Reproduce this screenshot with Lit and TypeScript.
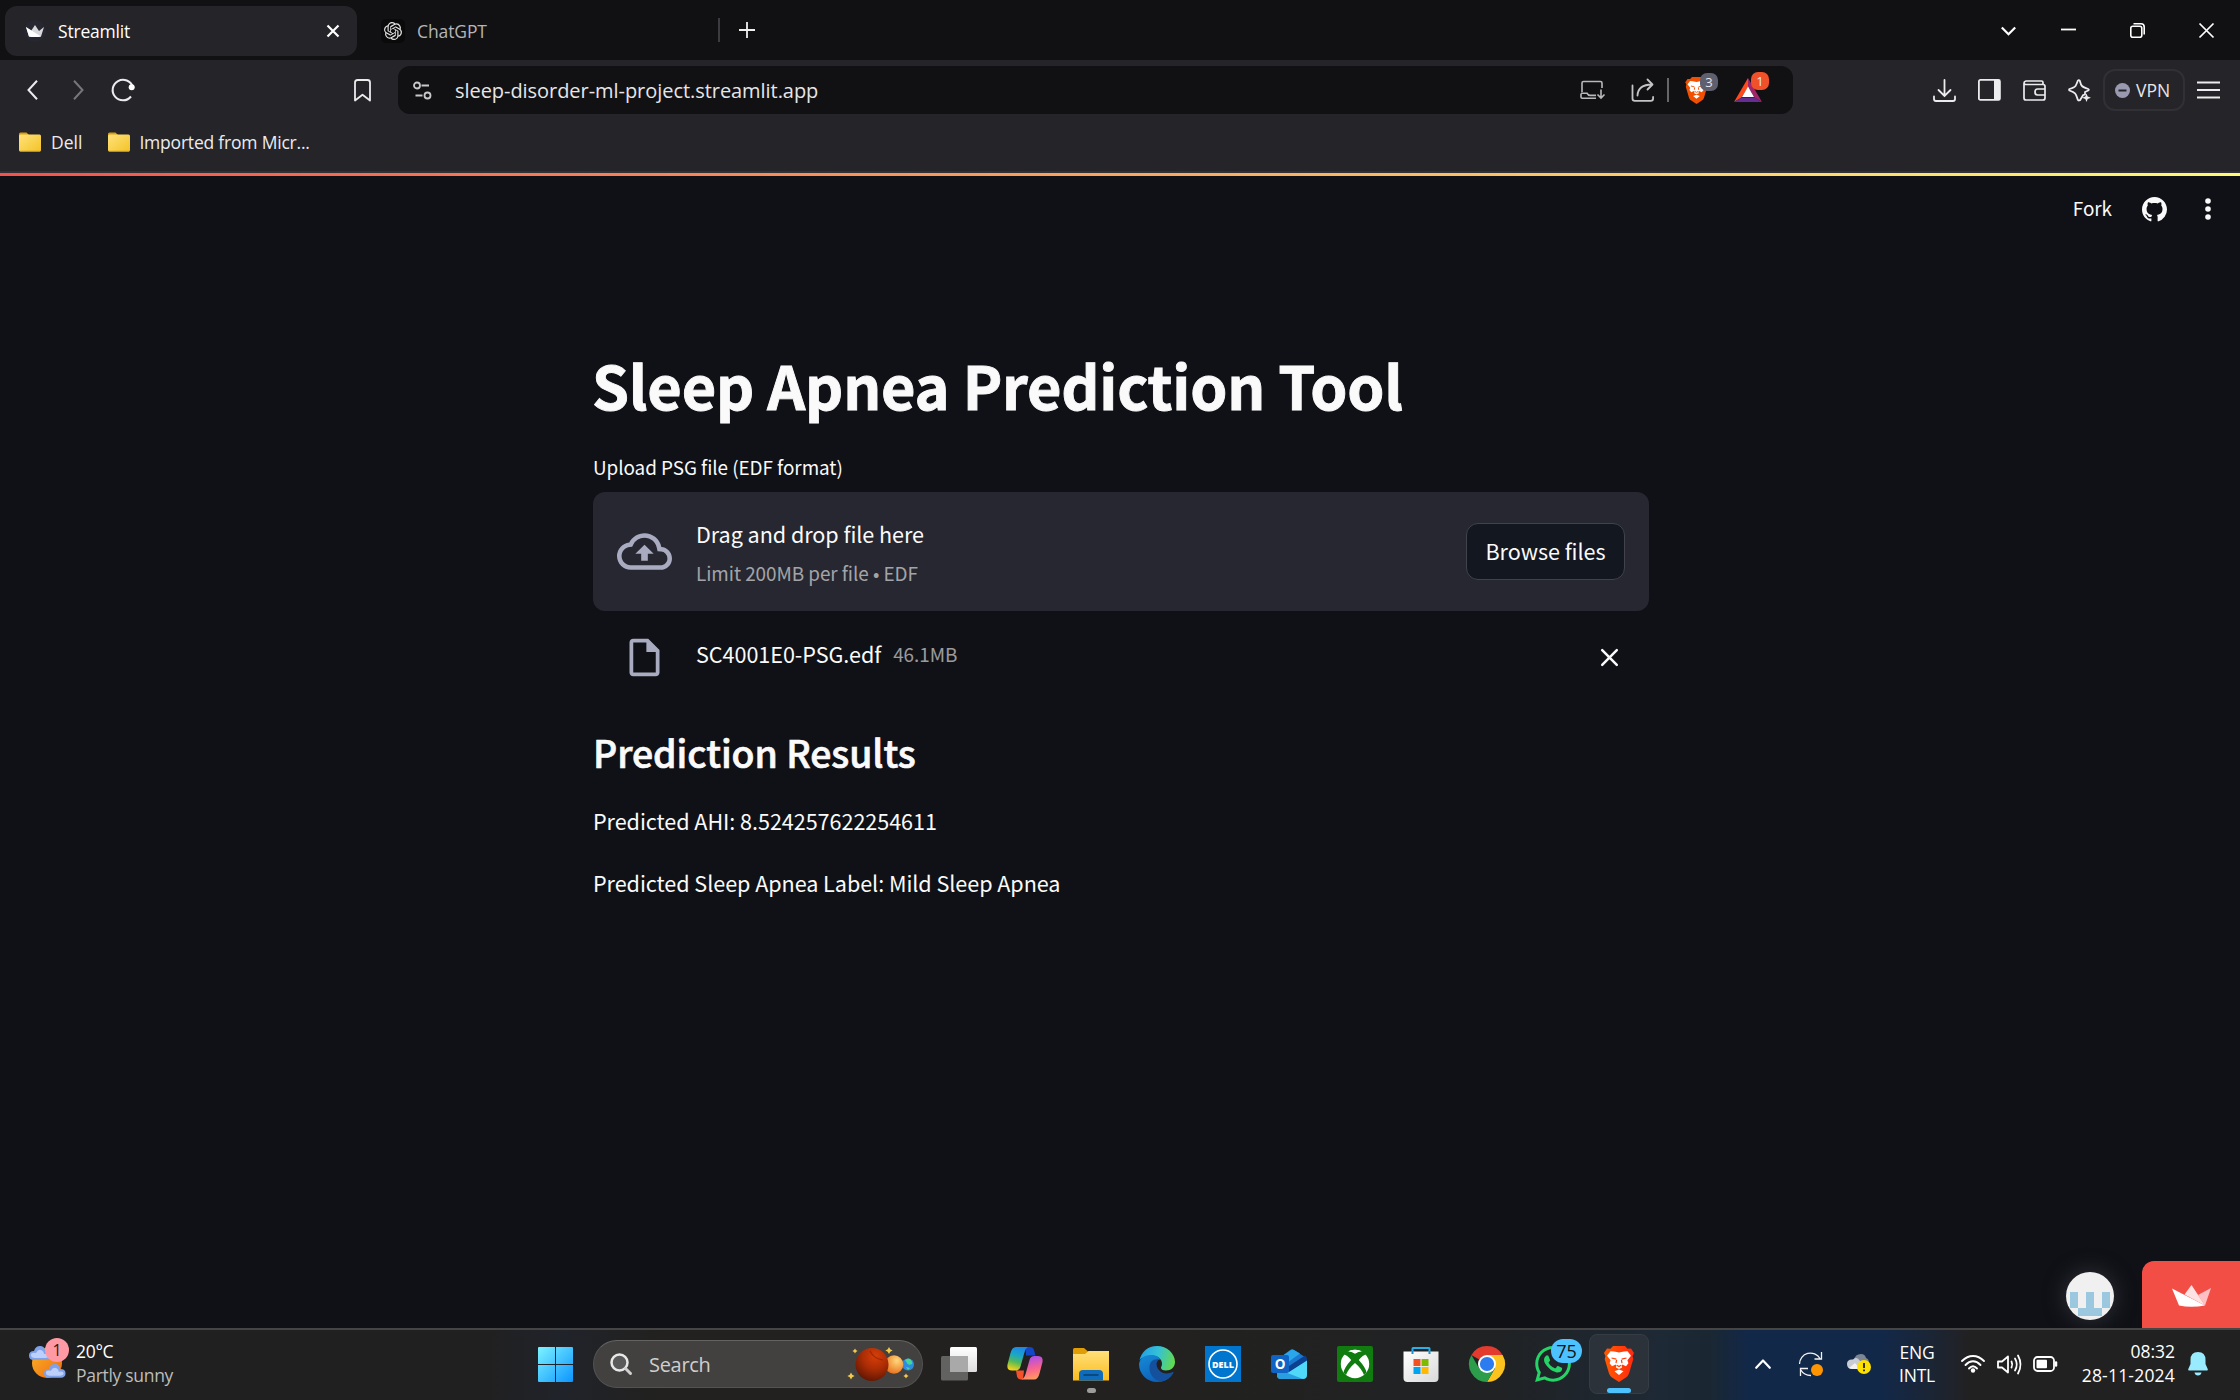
import { LitElement, html, css, svg, TemplateResult } from "lit";
import { customElement } from "lit/decorators.js";

const icon = (w: number, h: number, body: TemplateResult, cls = "", box = `0 0 ${w} ${h}`) =>
  html`<svg class="ic ${cls}" width=${w} height=${h} viewBox=${box} fill="none">${body}</svg>`;

const lionBody = (fill: string) => svg`
  <path fill=${fill} d="M6.5 2.8L9 0h12l2.500 2.800L27 2.500l3 4.500-1.500 3 .8 3L25 27.500q-.8 2.400-3 3.900L15 36l-7-4.600q-2.200-1.500-3-3.900L.7 13l.8-3L0 7l3-4.500z"/>
  <path fill="#fff" d="M10 5.600l5 1 5-1 3.500-.4L27 9.800l-3.600 4.400 1 3-2.400 3-3.600-1.600-.9 1.200.6 1.700L15 23l-3.100-1.500.6-1.700-.9-1.200L8 20.200l-2.400-3 1-3L3 9.800l3.500-4.600z"/>
  <path fill="#fff" d="M15 23.600l4.500 1.700-4.500 3.700-4.500-3.700z"/>
  <path stroke=${fill} stroke-width="1.200" d="M7.500 12l4.800 1.200M22.500 12l-4.800 1.200M12.600 13.800l-.6 3.400M17.400 13.800l.6 3.400M12.800 19.300l2.200 1.200 2.200-1.200"/>`;

@customElement("app-root")
export class AppRoot extends LitElement {
  static styles = css`
    :host {
      display: block; width: 2240px; height: 1400px; overflow: hidden;
      font-family: "Open Sans", "Noto Sans", sans-serif; color: #fff; background: #0f1116;
    }
    * { box-sizing: border-box; margin: 0; }
    .screen { display: flex; flex-direction: column; height: 1400px; }
    .row { display: flex; align-items: center; }
    .ic { display: block; flex: none; overflow: visible; }
    .t { flex: none; white-space: nowrap; }

    .tabs { height: 60px; background: #111113; padding: 0 26px 0 5px; }
    .tab { height: 50px; width: 352px; margin-top: 2px; border-radius: 12px; padding: 0 18px 0 18px; font-size: 17.500px; letter-spacing: -0.200px; }
    .tab.active { background: #252429; }
    .tab .name { margin-left: 11px; flex: 1; }
    .tab.idle { width: 355px; margin-left: 6px; color: #b5b5b8; border-radius: 0; letter-spacing: -0.100px; }
    .tab.idle .name { margin-left: 12px; }
    .divider { width: 1.500px; height: 24px; background: #3c3b40; }
    .newtab { margin: 0 auto 0 19px; }
    .wincontrols { gap: 54px; }
    .wincontrols .first { margin-right: -9px; }

    .toolbar { height: 60px; background: #252429; padding: 0 20px 0 27px; }
    .fwd { margin-left: 35px; }
    .reload { margin-left: 27px; }
    .bm { margin-left: 219px; }
    .url { width: 1395px; height: 48px; background: #111113; border-radius: 12px; margin-left: 27px; padding: 0 24px 0 15px; }
    .address { font-size: 20px; margin-left: 23px; flex: 1; color: #e6e6e9; letter-spacing: -0.050px; }
    .share { margin-left: 26px; }
    .usep { width: 2px; height: 24px; background: #66666a; margin: 0 16px 0 12px; }
    .bat { margin: 0 7px 0 26px; }
    .actions { gap: 22px; margin-left: auto; }
    .badged { position: relative; }
    .badge {
      position: absolute; width: 18px; height: 18px; border-radius: 7px; font: 13px/18px "Open Sans", sans-serif;
      text-align: center; background: #5e606f; color: #e8e8ee;
    }
    .badge.b3 { left: 15px; top: -4px; }
    .badge.b1 { left: 17px; top: -6px; background: #f0502a; }
    .vpn { width: 82px; height: 42px; border: 2px solid #303035; border-radius: 12px; margin: 0 12px 0 11px; padding-left: 10px; gap: 6px; font-size: 17.500px; color: #e6e6ea; }

    .bookmarks { height: 51px; background: #252429; padding: 0 19px 7px; font-size: 17.500px; color: #ececee; }
    .bookmarks .t { margin-left: 10px; }
    .bookmarks .imp { margin-left: 9px; letter-spacing: -0.200px; }
    .b2 { margin-left: 26px; }
    .edge { height: 2px; background: #313035; }
    .deco { height: 3px; background: linear-gradient(90deg, #f6524d, #fffb73); }

    .page { flex: 1; display: flex; flex-direction: column; background: #0f1116; overflow: hidden; font-family: "Noto Sans CJK JP", sans-serif; color: #fafafa; letter-spacing: -0.055px; }
    .apphead { height: 66px; justify-content: flex-end; padding-right: 29px; font-size: 18.900px; }
    .apphead .t { padding-bottom: 3px; }
    .apphead .gh { margin: 0 38px 0 30px; }
    .main { width: 1056px; margin: 102px 0 0 593px; display: flex; flex-direction: column; }
    h1 { font-size: 59.400px; line-height: 80px; font-weight: 700; white-space: nowrap; letter-spacing: -0.210px; -webkit-text-stroke: 0.900px #fafafa; margin-left: -1px; }
    .label { font-size: 18.900px; line-height: 30px; margin: 28px 0 10px; }
    .drop { height: 119px; background: #262730; border-radius: 12px; padding: 0 24px; }
    .drop .copy { margin-left: 24px; flex: 1; padding-top: 2px; }
    .body { font-size: 21.600px; line-height: 39px; }
    .small { font-size: 18.900px; line-height: 39px; color: rgba(250, 250, 250, 0.6); }
    .browse { width: 159px; height: 57px; border: 1.500px solid #41424b; border-radius: 12px; background: #131720; display: flex; align-items: center; justify-content: center; font-size: 21.600px; padding-bottom: 3px; }
    .file { height: 50px; margin-top: 21px; padding: 0 31px 0 29px; }
    .file .meta { margin-left: 29px; flex: 1; padding-bottom: 8px; gap: 12px; }
    h2 { font-size: 37.400px; line-height: 50px; font-weight: 500; white-space: nowrap; letter-spacing: -0.060px; -webkit-text-stroke: 0.700px #fafafa; margin-top: 45px; }
    p { font-size: 21.600px; line-height: 38px; white-space: nowrap; }
    .p1 { margin-top: 25px; }
    .p2 { margin-top: 24px; }
    .hosted { margin-top: auto; justify-content: flex-end; height: 67px; }
    .avatar { margin: 2px 28px 0 0; border-radius: 50%; box-shadow: 0 0 18px 4px #26282f; }
    .crown { width: 98px; height: 67px; background: #f24e46; border-radius: 12px 0 0 0; padding: 2px 0 0 30px; }

    .taskbar {
      height: 72px; border-top: 2px solid #454545; padding: 0 32px 2px 28px; font-size: 17.500px;
      background: linear-gradient(90deg, #202020 0 480px, #20232a 560px, #22211f 660px 1180px, #202224 1500px, #1d2935 1660px, #1a2733 1710px, #122849 1750px 1880px, #1b2535 1930px, #222122 1970px, #212121);
    }
    .weather .lines { line-height: 24px; margin-left: 11px; width: 102px; white-space: nowrap; letter-spacing: -0.300px; padding-bottom: 2px; }
    .dim { color: #bdbdbd; }
    .badge.w { left: 17px; top: -8px; width: 24px; height: 24px; border-radius: 50%; background: #ff99a4; color: #222; font: 16px/24px "Open Sans", sans-serif; }
    .center { margin-left: 360px; }
    .search { width: 330px; height: 48px; border-radius: 24px; background: #424140; border: 1.500px solid #535252; border-top-color: #646362; margin: 0 3px 0 20px; padding: 0 8px 0 16px; font-size: 20px; color: #cfcfcf; }
    .search .word { margin-left: 17px; flex: 1; letter-spacing: -0.300px; }
    .app { width: 66px; height: 70px; display: flex; align-items: center; justify-content: center; position: relative; }
    .pip { position: absolute; bottom: 6px; height: 5px; width: 9px; border-radius: 3px; background: #9c9c9c; }
    .pip.on { width: 24px; background: #4cc2ff; }
    .tile { width: 60px; height: 60px; border-radius: 8px; background: #2b323a; border: 1.500px solid #363c43; display: flex; align-items: center; justify-content: center; }
    .badge.n75 { left: 31px; top: 10px; width: 31px; height: 24px; border-radius: 12px; background: #4cc2ff; color: #111; font: 18px/24px "Open Sans", sans-serif; }
    .tray { margin-left: auto; }
    .sync { margin-left: 28px; }
    .one { margin: 0 26px 0 24px; }
    .wifi { margin-left: 24px; }
    .vol { margin: 0 11px 0 12px; }
    .lang { width: 40px; text-align: center; line-height: 23px; letter-spacing: -0.200px; }
    .clock { width: 94px; text-align: right; line-height: 24px; margin: 0 13px 0 23px; padding-bottom: 2px; white-space: nowrap; }
    .clock .date { letter-spacing: 0.200px; }
  `;

  tabStrip() {
    return html`<div class="row tabs">
      <div class="row tab active">
        ${icon(24, 24, svg`<circle cx="12" cy="12" r="11" fill="#262730"/><path fill="#d8d8dc" d="M3 8l5 4 4-6 4 6 5-4-3 9.500q-6 1-12 0z"/><path fill="#fff" d="M3 8l15 9.500q-6 1-12 0z"/>`)}
        <span class="t name">Streamlit</span>
        ${icon(12, 12, svg`<path stroke="#fff" stroke-width="2.200" d="M.5.5l11 11M11.500.5l-11 11"/>`)}
      </div>
      <div class="row tab idle">
        ${icon(24, 24, svg`<rect width="24" height="24" rx="5" fill="#0a0a0a"/><path transform="translate(3 3) scale(.75)" fill="#e4e4e4" d="M22.2819 9.8211a5.9847 5.9847 0 0 0-.5157-4.9108 6.0462 6.0462 0 0 0-6.5098-2.9A6.0651 6.0651 0 0 0 4.9807 4.1818a5.9847 5.9847 0 0 0-3.9977 2.9 6.0462 6.0462 0 0 0 .7427 7.0966 5.98 5.98 0 0 0 .511 4.9107 6.051 6.051 0 0 0 6.5146 2.9001A5.9847 5.9847 0 0 0 13.2599 24a6.0557 6.0557 0 0 0 5.7718-4.2058 5.9894 5.9894 0 0 0 3.9977-2.9001 6.0557 6.0557 0 0 0-.7475-7.0729zm-9.022 12.6081a4.4755 4.4755 0 0 1-2.8764-1.0408l.1419-.0804 4.7783-2.7582a.7948.7948 0 0 0 .3927-.6813v-6.7369l2.02 1.1686a.071.071 0 0 1 .038.052v5.5826a4.504 4.504 0 0 1-4.4945 4.4944zm-9.6607-4.1254a4.4708 4.4708 0 0 1-.5346-3.0137l.142.0852 4.783 2.7582a.7712.7712 0 0 0 .7806 0l5.8428-3.3685v2.3324a.0804.0804 0 0 1-.0332.0615L9.74 19.9502a4.4992 4.4992 0 0 1-6.1408-1.6464zM2.3408 7.8956a4.485 4.485 0 0 1 2.3655-1.9728V11.6a.7664.7664 0 0 0 .3879.6765l5.8144 3.3543-2.0201 1.1685a.0757.0757 0 0 1-.071 0l-4.8303-2.7865A4.504 4.504 0 0 1 2.3408 7.872zm16.5963 3.8558L13.1038 8.364 15.1192 7.2a.0757.0757 0 0 1 .071 0l4.8303 2.7913a4.4944 4.4944 0 0 1-.6765 8.1042v-5.6772a.79.79 0 0 0-.407-.667zm2.0107-3.0231l-.142-.0852-4.7735-2.7818a.7759.7759 0 0 0-.7854 0L9.409 9.2297V6.8974a.0662.0662 0 0 1 .0284-.0615l4.8303-2.7866a4.4992 4.4992 0 0 1 6.6802 4.66zM8.3065 12.863l-2.02-1.1638a.0804.0804 0 0 1-.038-.0567V6.0742a4.4992 4.4992 0 0 1 7.3757-3.4537l-.142.0805L8.704 5.459a.7948.7948 0 0 0-.3927.6813zm1.0976-2.3654l2.602-1.4998 2.6069 1.4998v2.9994l-2.5974 1.4997-2.6067-1.4997Z"/>`)}
        <span class="t name">ChatGPT</span>
      </div>
      <div class="divider"></div>
      ${icon(16, 16, svg`<path stroke="#f0f0f0" stroke-width="1.800" d="M8 0v16M0 8h16"/>`, "newtab")}
      <div class="row wincontrols">
        ${icon(15, 15, svg`<path stroke="#fff" stroke-width="2.200" d="M.8 4.500l6.700 6.700 6.700-6.700"/>`, "first")}
        ${icon(15, 15, svg`<path stroke="#fff" stroke-width="1.800" d="M0 6.500h15"/>`)}
        ${icon(15, 15, svg`<rect x=".8" y="3.200" width="11" height="11" rx="2" stroke="#fff" stroke-width="1.600"/><path stroke="#fff" stroke-width="1.600" d="M3.500.8H11q3.200 0 3.200 3.200v7.500"/>`)}
        ${icon(15, 15, svg`<path stroke="#fff" stroke-width="1.700" d="M.5.5l14 14M14.500.5l-14 14"/>`)}
      </div>
    </div>`;
  }

  toolbar() {
    const s = "#ececee";
    return html`<div class="row toolbar">
      ${icon(11, 20, svg`<path stroke=${s} stroke-width="2" d="M10 .8L1.500 10 10 19.200"/>`)}
      ${icon(11, 20, svg`<path stroke="#77767b" stroke-width="2" d="M1 .8L9.500 10 1 19.200"/>`, "fwd")}
      ${icon(24, 24, svg`<path stroke=${s} stroke-width="2" d="M20 18.500A10.300 10.300 0 1 1 21.800 9"/><circle cx="20.700" cy="9.300" r="3" fill="#fff"/>`, "reload")}
      ${icon(17, 23, svg`<path stroke=${s} stroke-width="1.800" stroke-linejoin="round" d="M1 3.500Q1 1 3.500 1h10Q16 1 16 3.500V21.500l-7.500-5.800L1 21.500z"/>`, "bm")}
      <div class="row url">
        ${icon(19, 19, svg`<g stroke="#c9c9cc" stroke-width="1.800"><circle cx="4" cy="4.500" r="3"/><path d="M8.500 4.500H16M2.500 14.500h7"/><circle cx="14.500" cy="14.500" r="3"/></g>`)}
        <span class="t address">sleep-disorder-ml-project.streamlit.app</span>
        ${icon(25, 20, svg`<g stroke="#b9b9bc" stroke-width="1.600"><path d="M2 12V3q0-1.500 1.500-1.500h17Q22 1.500 22 3v5M1 13.500V17q0 1.200 1.200 1.200H16M1 13.200h6q1 2.200 3 2.200h6M21 9.500v8M17.500 14.500l3.500 3.500 3.500-3.500"/></g>`)}
        ${icon(24, 24, svg`<g stroke="#c4c4c7" stroke-width="1.800" stroke-linecap="round" stroke-linejoin="round"><path d="M1.500 7.500v13q0 2.300 2.300 2.300h16q2.300 0 2.300-2.300v-1.500M6.500 17.500Q7 6.500 21 6.500M16.500 1.500l5 5-5 5"/></g>`, "share")}
        <div class="usep"></div>
        <div class="badged">${icon(23, 27, lionBody("#f25000"), "", "0 0 30 36")}<span class="badge b3">3</span></div>
        <div class="badged bat">${icon(28, 24, svg`<path fill="#ff4a1c" d="M14 0v9L7.500 19.500 0 24z"/><path fill="#a0256b" d="M14 0v9l6.500 10.500L28 24z"/><path fill="#662d91" d="M0 24l7.500-4.500h13L28 24z"/><path fill="#fff" d="M14 8.500l6 10.500H8z"/>`)}<span class="badge b1">1</span></div>
      </div>
      <div class="row actions">
        ${icon(23, 23, svg`<g stroke=${s} stroke-width="1.800" stroke-linecap="round"><path d="M11.500 1v15M5.500 11l6 6 6-6M1 17.500V20q0 2 2 2h17q2 0 2-2v-2.500"/></g>`)}
        ${icon(23, 22, svg`<rect x=".9" y=".9" width="21" height="20" rx="1.500" stroke=${s} stroke-width="1.800"/><path fill=${s} d="M16 1h6v20h-6z"/>`)}
        ${icon(23, 21, svg`<g stroke=${s} stroke-width="1.700"><path d="M1 3.500V18q0 2 2 2h17q2 0 2-2V6.500q0-2-2-2H3Q1 4.500 1 3t2-2h15.500q1.500 0 1.500 1.500v2M22 9h-7.500Q12 9 12 12t2.500 3H22"/></g>`)}
        ${icon(24, 23, svg`<path stroke=${s} stroke-width="1.800" stroke-linejoin="round" d="M17 15.500l-2 .700-3 5-1 .300q-1 0-1.300-1-1.500-5-2.700-6.200T1.500 11.500q-.8-.8 0-1.500Q6.500 8.500 7.500 7T9.800 1.800q1-1.500 2 0 1 4 2.200 5.200t6.200 3q1.300.7 0 1.500L17 13z"/><path fill=${s} d="M18.500 14.500l1.200 3 3.300 1.200-3.300 1.200-1.200 3.100-1.200-3.100-3.300-1.200 3.300-1.200z"/>`)}
      </div>
      <div class="row vpn">${icon(15, 15, svg`<circle cx="7.500" cy="7.500" r="7.500" fill="#999ab0"/><path stroke="#252429" stroke-width="2" d="M3.500 7.500h8"/>`)}<span class="t">VPN</span></div>
      ${icon(23, 18, svg`<path stroke=${s} stroke-width="1.900" d="M0 1.500h23M0 9h23M0 16.500h23"/>`)}
    </div>`;
  }

  folder() {
    return icon(22, 20, svg`<path fill="#d9a013" d="M0 2q0-1.500 1.500-1.500h6L10 3v6H0z"/><rect y="2.500" width="22" height="17" rx="1.500" fill="url(#gFold)"/><path stroke="#c99518" d="M1 19.300h20"/>
      <defs><linearGradient id="gFold" x1="0" y1="0" x2="1" y2="1"><stop stop-color="#ffe27a"/><stop offset="1" stop-color="#f3c327"/></linearGradient></defs>`);
  }

  page() {
    const ln = "#a9abc0";
    return html`<div class="page">
      <div class="row apphead">
        <span class="t">Fork</span>
        ${icon(25, 25, svg`<path fill="#fafafa" d="M8 0C3.580 0 0 3.580 0 8c0 3.540 2.290 6.530 5.470 7.590.4.070.55-.17.55-.38 0-.19-.01-.82-.01-1.490-2.010.37-2.530-.49-2.690-.94-.09-.23-.48-.94-.82-1.130-.28-.15-.68-.52-.01-.53.63-.01 1.080.58 1.230.82.72 1.210 1.870.87 2.330.66.07-.52.28-.87.51-1.070-1.780-.2-3.640-.89-3.640-3.950 0-.87.31-1.590.82-2.150-.08-.2-.36-1.020.08-2.120 0 0 .67-.21 2.200.82.64-.18 1.320-.27 2-.27.68 0 1.360.09 2 .27 1.530-1.040 2.200-.82 2.200-.82.44 1.100.16 1.920.08 2.120.51.56.82 1.270.82 2.150 0 3.070-1.870 3.750-3.650 3.950.29.25.54.73.54 1.480 0 1.070-.01 1.930-.01 2.200 0 .21.15.46.55.38A8.013 8.013 0 0016 8c0-4.420-3.580-8-8-8z"/>`, "gh", "0 0 16 16")}
        ${icon(6, 22, svg`<g fill="#fafafa"><circle cx="3" cy="3" r="2.800"/><circle cx="3" cy="11" r="2.800"/><circle cx="3" cy="19" r="2.800"/></g>`)}
      </div>
      <div class="main">
        <h1>Sleep Apnea Prediction Tool</h1>
        <div class="label">Upload PSG file (EDF format)</div>
        <div class="row drop">
          ${icon(55, 55, svg`<path fill=${ln} d="M19.350 10.040A7.490 7.490 0 0012 4C9.110 4 6.600 5.640 5.350 8.040A5.994 5.994 0 000 14c0 3.310 2.690 6 6 6h13c2.760 0 5-2.240 5-5 0-2.640-2.050-4.780-4.650-4.960zM19 18H6c-2.210 0-4-1.790-4-4 0-2.050 1.530-3.760 3.560-3.970l1.070-.11.5-.95A5.469 5.469 0 0112 6c2.620 0 4.880 1.860 5.390 4.430l.3 1.500 1.530.11A2.980 2.980 0 0122 15c0 1.650-1.350 3-3 3zM8 13h2.550v3h2.900v-3H16l-4-4z"/>`, "", "0 0 24 24")}
          <div class="copy">
            <div class="body">Drag and drop file here</div>
            <div class="small">Limit 200MB per file • EDF</div>
          </div>
          <div class="browse"><span class="t">Browse files</span></div>
        </div>
        <div class="row file">
          ${icon(45, 45, svg`<path fill=${ln} d="M14 2H6c-1.100 0-2 .9-2 2v16c0 1.100.89 2 1.990 2H18c1.100 0 2-.9 2-2V8l-6-6zM6 20V4h7v5h5v11H6z"/>`, "", "0 0 24 24")}
          <div class="row meta">
            <span class="t body">SC4001E0-PSG.edf</span>
            <span class="t small">46.1MB</span>
          </div>
          ${icon(17, 17, svg`<path stroke="#fafafa" stroke-width="2.500" stroke-linecap="round" d="M1.200 1.200l14.600 14.600M15.800 1.200L1.200 15.800"/>`)}
        </div>
        <h2>Prediction Results</h2>
        <p class="p1">Predicted AHI: 8.524257622254611</p>
        <p class="p2">Predicted Sleep Apnea Label: Mild Sleep Apnea</p>
      </div>
      <div class="row hosted">
        ${icon(48, 48, svg`<clipPath id="cAv"><circle cx="24" cy="24" r="24"/></clipPath><g clip-path="url(#cAv)"><path fill="#f0f0f0" d="M0 0h48v48H0z"/><path fill="#9bc7df" d="M4 20h8v16h8V20h8v16h8V20h8v16h-8v8H12v-8H4z"/></g>`, "avatar")}
        <div class="row crown">${icon(39, 22, svg`<path fill="#ffc0c3" d="M39 3L33 20.500 26 10z"/><path fill="#ffe3e4" d="M19.500 0L33 20.500 12.500 9.500z"/><path fill="#fff" d="M0 3.500L33 20.500q-14 2.500-26 0z"/>`)}</div>
      </div>
    </div>`;
  }

  taskbar() {
    const star = (x: number, y: number, r: number) => svg`<path fill="#f2c94c" d="M${x} ${y - r}l${r * 0.35} ${r * 0.65} ${r * 0.65} ${r * 0.35}-${r * 0.65} ${r * 0.35}-${r * 0.35} ${r * 0.65}-${r * 0.35}-${r * 0.65}-${r * 0.65}-${r * 0.35} ${r * 0.65}-${r * 0.35}z"/>`;
    const cloud = (x: number, y: number, k: number) => svg`<g transform="translate(${x} ${y}) scale(${k})"><path fill="#7fa2ec" d="M5 14q-5 0-5-4.500T5 5q1.500-5 6-5t5.500 5Q22 5 22 9.500T17 14z"/><path fill="#bcd0fb" d="M6 12q-4 0-4-3t5-2q2-4 5-3t3 4q5-1 5 1.500T16 12z"/></g>`;
    const app = (body: TemplateResult, extra: unknown = "") => html`<div class="app">${icon(36, 36, body)}${extra}</div>`;
    return html`<div class="row taskbar">
      <div class="row weather">
        <div class="badged">${icon(37, 36, svg`<defs><linearGradient id="gSun" x1="0" y1="0" x2="1" y2="1"><stop stop-color="#fbb42c"/><stop offset="1" stop-color="#ef6a0c"/></linearGradient></defs><circle cx="19" cy="17" r="15" fill="url(#gSun)"/>${cloud(1, 0, 1)}${cloud(16, 18, 0.98)}`)}<span class="badge w">1</span></div>
        <div class="lines"><div>20°C</div><div class="dim">Partly sunny</div></div>
      </div>
      <div class="row center">
        ${icon(35, 35, svg`<defs><linearGradient id="gWin" gradientUnits="userSpaceOnUse" x1="0" y1="0" x2="35" y2="35"><stop stop-color="#7df3ff"/><stop offset="1" stop-color="#0c95ff"/></linearGradient></defs><path fill="url(#gWin)" d="M1 0h16v17H0V1q0-1 1-1zM18 0h16q1 0 1 1v16H18zM0 18h17v17H1q-1 0-1-1zM18 18h17v16q0 1-1 1H18z"/>`)}
        <div class="row search">
          ${icon(22, 22, svg`<circle cx="9.500" cy="9.500" r="8" stroke="#e8e8e8" stroke-width="2.500" fill="#5a5a5a"/><path stroke="#d0d0d0" stroke-width="3" stroke-linecap="round" d="M15.500 15.500l5 5"/>`)}
          <span class="t word">Search</span>
          ${icon(66, 36, svg`<defs><radialGradient id="gMars" cx=".6" cy=".25" r=".8"><stop stop-color="#d83e08"/><stop offset=".5" stop-color="#a92c05"/><stop offset="1" stop-color="#5c1504"/></radialGradient><radialGradient id="gPea" cx=".65" cy=".3" r=".8"><stop stop-color="#ffd67a"/><stop offset="1" stop-color="#e66a16"/></radialGradient></defs>
            <circle cx="60" cy="18.500" r="6" fill="#2d8ce0"/><path fill="#46d39a" d="M57 14q4-3 6 0t1 4q-4 2-5-1zM58 21l4 1-2 2z"/><circle cx="46" cy="18.500" r="9.300" fill="url(#gPea)"/><circle cx="24" cy="18.500" r="16.500" fill="url(#gMars)"/>
            <path stroke="#7e1f04" stroke-width="1.200" opacity=".6" d="M22 5q4 8 13 9"/>${star(7, 5, 2.6)}${star(3, 30, 3.6)}${star(41, 4.5, 3.6)}${star(58, 30, 2.6)}`)}
        </div>
        ${app(svg`<defs><linearGradient id="gTv" x1="0" y1="0" x2="0" y2="1"><stop stop-color="#fff"/><stop offset="1" stop-color="#dedede"/></linearGradient></defs><rect x="9" y="1" width="27" height="25" rx="1.500" fill="url(#gTv)"/><rect y="10" width="27" height="24.500" rx="1.500" fill="#6d6d6d" fill-opacity=".85"/><path fill="#a9a9a9" d="M9 10h18v16H9z"/>`)}
        ${app(svg`<defs><linearGradient id="gC1" x1=".6" y1="0" x2=".35" y2="1"><stop stop-color="#1d86e6"/><stop offset=".35" stop-color="#1aa6c8"/><stop offset=".65" stop-color="#52b95a"/><stop offset="1" stop-color="#f6d21a"/></linearGradient><linearGradient id="gC2" x1=".6" y1="1" x2=".4" y2="0"><stop stop-color="#ff9d5c"/><stop offset=".45" stop-color="#f9638f"/><stop offset="1" stop-color="#a54df0"/></linearGradient></defs>
          <path fill="#1446c8" d="M19 1h4q3 0 4 3l1.500 5.500H19z"/><path fill="#f4502a" d="M9 24.500h8l-1 9h-2q-3 0-4-3z"/>
          <path fill="url(#gC1)" d="M9 1h12q-2.500 1-4 7l-3.500 12.500Q12.500 24.500 8.500 24.500H5Q-.5 24.500.5 18.500L3.500 7Q5 1 9 1z"/>
          <path fill="url(#gC2)" d="M27 33.500H14.500q3-1 4.500-7l3.500-12.500q1-4 5-4H31q5.500 0 4.500 6L32.500 27.500Q31 33.500 27 33.500z"/>`)}
        ${app(svg`<defs><linearGradient id="gEx" x1="0" y1="0" x2="0" y2="1"><stop stop-color="#ffe07a"/><stop offset="1" stop-color="#fcbc1f"/></linearGradient></defs><path fill="#e09d05" d="M0 3.500Q0 2 1.500 2H11l4 3.500V10H0z"/><path fill="url(#gEx)" d="M0 8h12l3.500-3H36v29.500H0z"/><path fill="#0f6cbd" d="M6 34.500V28q0-4 4-4h16q4 0 4 4v6.500z"/><path stroke="#0b4677" stroke-width="1.800" d="M10.500 29h15"/>`, html`<span class="pip"></span>`)}
        ${app(svg`<defs><linearGradient id="gE1" x1="0" y1=".3" x2="1" y2=".5"><stop stop-color="#1f9fe8"/><stop offset=".5" stop-color="#35c1d6"/><stop offset="1" stop-color="#63d94e"/></linearGradient><linearGradient id="gE2" x1="0" y1="0" x2=".6" y2="1"><stop stop-color="#168bd6"/><stop offset="1" stop-color="#0d5fb8"/></linearGradient></defs>
          <path fill="url(#gE1)" d="M.5 14.500C2 6 9 0 18 0c10 0 18 7.500 18 16 0 5-4 8.500-9 8.500-3.500 0-5-1.500-5-2.800 0-1 1-1.500 1-4 0-4.500-4-8-10-8-6 0-10.500 2-12.500 4.800z"/>
          <path fill="url(#gE2)" d="M0 18C1 12 6 9 12 9c5 0 8 2 9.500 4.500-4-.5-7.500 2.500-7.500 7.500 0 7 5.500 10.500 10 11.500q4 .5 7.500-2C28.500 34 24 36 18 36 8 36 0 28 0 18z"/>
          <path fill="#14509c" d="M10.500 22C10.500 15 15 12.500 20 13.500c-2 1.500-2.800 3.500-2.300 6C18.500 24 23 27.500 27.500 27.500c2.500 0 4.500-.6 6.200-1.400.6-.2 1 .3.7.8C31.500 32 27 35 21.500 35.300 15 34 10.500 28.500 10.500 22z"/>`)}
        ${app(svg`<path fill="#0076ce" d="M0 0h36v36H0z"/><circle cx="18" cy="18" r="14" stroke="#fff" stroke-width="1.600"/><text x="18" y="21.500" text-anchor="middle" textLength="22" lengthAdjust="spacingAndGlyphs" font-family="Open Sans" font-weight="800" font-size="9.500" fill="#fff">DELL</text>`)}
        ${app(svg`<path fill="#1b78cf" d="M7 13L19.500 3.800q1.500-1 3 0L34 11v10L18 27z"/><path fill="#2aa6ea" d="M10 11l10-7q1.500-1 3 0l6 3.500L16 17z"/><path fill="#0b3f8f" d="M18 20L34 9.500q2 1.500 2 3.500v4L18 27z"/><path fill="#4fd8f7" d="M18 26l18-11.500V29q0 4-4 4H10q-4 0-4-4v-3z"/><path fill="#2a9fe0" d="M6 23l26 10H10q-4 0-4-4z"/><rect y="9" width="18" height="18" rx="2" fill="#0f63c4"/><text x="9" y="22.800" text-anchor="middle" font-family="Open Sans" font-weight="700" font-size="13.500" fill="#fff">O</text>`)}
        ${app(svg`<rect width="36" height="36" rx="2" fill="#107c10"/><circle cx="18" cy="18" r="14.200" fill="#fff"/><path fill="#107c10" d="M8.500 6q4-2.500 9.500 1.200Q23.500 3.500 27.500 6l1.800 2.300q-3.300.8-7.500 5.700 6.800 7.500 7.700 12.500L27 29q-2.500-6.500-9-12-6.500 5.500-9 12l-2.500-2.500q.9-5 7.700-12.500-4.200-4.900-7.500-5.700z"/><path fill="#fff" d="M10.500 5.700q3.500-1.900 7.500-1.900t7.500 1.900q-3-.6-7.500 2.100-4.500-2.700-7.500-2.100z"/>`)}
        ${app(svg`<defs><linearGradient id="gSt" x1="0" y1="0" x2="1" y2="1"><stop stop-color="#fff"/><stop offset="1" stop-color="#d9d9d9"/></linearGradient></defs><path stroke="#29b0e8" stroke-width="2" d="M9.500 7V2.500Q9.500 2 10 2h16q.5 0 .5.500V7"/><path fill="url(#gSt)" d="M.5 5.500h35V32q0 4-4 4h-27q-4 0-4-4z"/><path stroke="#1b8fd0" stroke-width="2" d="M9.500 5v3M26.500 5v3"/><path fill="#f25022" d="M10.500 13h7v7h-7z"/><path fill="#7fba00" d="M18.500 13h7v7h-7z"/><path fill="#00a4ef" d="M10.500 21h7v7h-7z"/><path fill="#ffb900" d="M18.500 21h7v7h-7z"/>`)}
        ${app(svg`<path fill="#e33b2e" d="M18 18L2.400 9A18 18 0 0 1 33.600 9z"/><path fill="#fcc31e" d="M18 9h15.600A18 18 0 0 1 18 36l7.800-13.500z"/><path fill="#2c9e4b" d="M2.400 9A18 18 0 0 0 18 36l7.800-13.500L10.200 22.500z"/><circle cx="18" cy="18" r="9" fill="#fff"/><circle cx="18" cy="18" r="7.100" fill="#2c7bf0"/>`)}
        ${app(svg`<path transform="scale(1.500)" fill="#25d366" d="M.057 24l1.687-6.163c-1.041-1.804-1.588-3.849-1.587-5.946.003-6.556 5.338-11.891 11.893-11.891 3.181.001 6.167 1.240 8.413 3.488 2.245 2.248 3.481 5.236 3.480 8.414-.003 6.557-5.338 11.892-11.893 11.892-1.990-.001-3.951-.5-5.688-1.448l-6.305 1.654zm6.597-3.807c1.676.995 3.276 1.591 5.392 1.592 5.448 0 9.886-4.434 9.889-9.885.002-5.462-4.415-9.890-9.881-9.892-5.452 0-9.887 4.434-9.889 9.884-.001 2.225.651 3.891 1.746 5.634l-.999 3.648 3.742-.981zm11.387-5.464c-.074-.124-.272-.198-.57-.347-.297-.149-1.758-.868-2.031-.967-.272-.099-.47-.149-.669.149-.198.297-.768.967-.941 1.165-.173.198-.347.223-.644.074-.297-.149-1.255-.462-2.390-1.475-.883-.788-1.480-1.761-1.653-2.059-.173-.297-.018-.458.13-.606.134-.133.297-.347.446-.521.151-.172.2-.296.3-.495.099-.198.05-.372-.025-.521-.075-.148-.669-1.611-.916-2.206-.242-.579-.487-.501-.669-.51l-.57-.01c-.198 0-.52.074-.792.372s-1.040 1.016-1.040 2.479 1.065 2.876 1.213 3.074c.149.198 2.095 3.200 5.076 4.487.709.306 1.263.489 1.694.626.712.226 1.360.194 1.872.118.571-.085 1.758-.719 2.006-1.413.248-.695.248-1.290.173-1.414z"/>`, html`<span class="badge n75">75</span>`)}
        <div class="app"><div class="tile">${icon(30, 36, svg`<defs><linearGradient id="gBr" gradientUnits="userSpaceOnUse" x1="0" y1="0" x2="30" y2="0"><stop stop-color="#ff5a00"/><stop offset="1" stop-color="#ff2a10"/></linearGradient></defs>${lionBody("url(#gBr)")}`)}</div><span class="pip on"></span></div>
      </div>
      <div class="row tray">
        ${icon(16, 10, svg`<path stroke="#fff" stroke-width="2.200" stroke-linecap="round" stroke-linejoin="round" d="M1.200 8.800L8 1.500l6.800 7.300"/>`)}
        ${icon(24, 24, svg`<path stroke="#f2f2f2" stroke-width="1.300" d="M.5 12A11 11 0 0 1 21 6.500M22.500 0v7h-7M1.500 24v-7.500H9M1.500 17.500Q5 23.500 12 23.500"/><circle cx="18" cy="18" r="6" fill="#ff9500"/>`, "sync")}
        ${icon(24, 20, svg`<path fill="#7d8694" d="M7 6q1-6 7-6 4 0 5 4 3 1 3 5v3H8z"/><path fill="#c9ccd2" d="M5 15q-5 0-5-5t6-4.500Q10 2 13 7l2 8z"/><path fill="#f2f2f2" d="M2 14l6-5 5 6H5z"/><circle cx="17" cy="13" r="7" fill="#ffe100"/><path stroke="#222" stroke-width="1.800" d="M17 9v5M17 15.500v1.800"/>`, "one")}
        <div class="lang"><div>ENG</div><div>INTL</div></div>
        ${icon(24, 18, svg`<g stroke="#fff" stroke-width="1.900" stroke-linecap="round"><path d="M1 6Q6 1 12 1t11 5M4.500 10Q8 6.300 12 6.300T19.500 10M8 13.500q2-2.200 4-2.200t4 2.200"/></g><circle cx="12" cy="15.500" r="2.200" fill="#fff"/>`, "wifi")}
        ${icon(25, 21, svg`<g stroke="#fff" stroke-width="1.800" stroke-linecap="round" stroke-linejoin="round"><path d="M1 7.500v6h4l6 5v-16l-6 5zM14.500 7.500q1.500 3 0 6M18 4.500q3.500 6 0 12M21 1.500q5 9 0 18"/></g>`, "vol")}
        ${icon(25, 16, svg`<rect x="1" y="1" width="20" height="14" rx="3.500" stroke="#fff" stroke-width="1.800"/><rect x="3.500" y="3.700" width="10.500" height="8.600" rx="1" fill="#fff"/><path stroke="#fff" stroke-width="2.500" stroke-linecap="round" d="M23 6.500v3"/>`)}
        <div class="clock"><div>08:32</div><div class="date">28-11-2024</div></div>
        ${icon(20, 24, svg`<path fill="#99ebff" d="M10 0Q17.500 0 17.500 8v4l2 4.500q1 2-1 2H1.500q-2 0-1-2l2-4.500V8Q2.500 0 10 0zM6.500 20.500h7Q13 23.500 10 23.500T6.500 20.500z"/>`)}
      </div>
    </div>`;
  }

  render() {
    return html`<div class="screen">
      ${this.tabStrip()}${this.toolbar()}
      <div class="row bookmarks">
        ${this.folder()}<span class="t">Dell</span>
        <div class="b2">${this.folder()}</div><span class="t imp">Imported from Micr...</span>
      </div>
      <div class="edge"></div><div class="deco"></div>
      ${this.page()}${this.taskbar()}
    </div>`;
  }
}
